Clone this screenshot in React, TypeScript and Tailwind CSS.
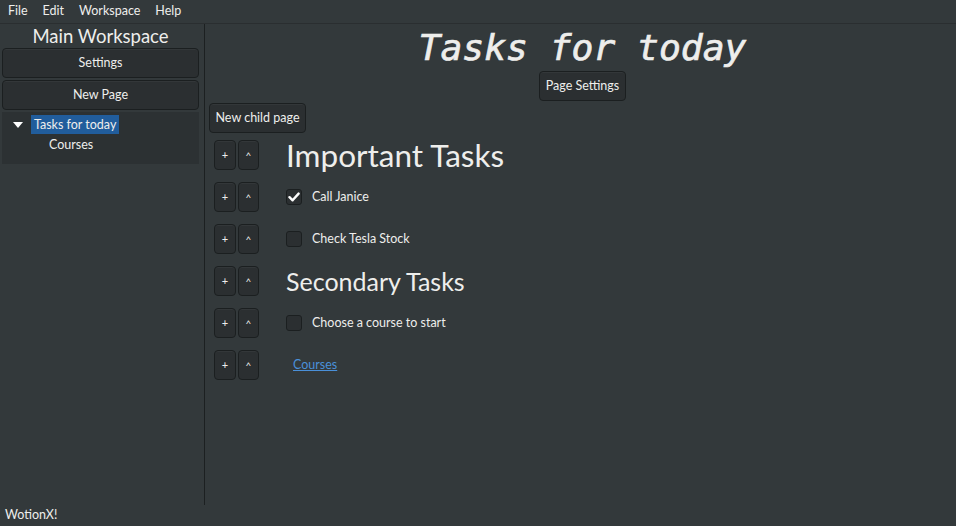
import React from "react";

const font = { fontFamily: "Lato, 'Open Sans', sans-serif" };

function Btn({ children, className = "" }: { children: React.ReactNode; className?: string }) {
  return (
    <div
      className={
        "flex items-center justify-center rounded-[4px] border border-[#1b1f20] bg-[#2b2f31] text-[#eeeeec] shadow-[inset_0_1px_0_rgba(255,255,255,0.04)] " +
        className
      }
    >
      {children}
    </div>
  );
}

function RowBtns() {
  return (
    <div className="flex gap-[2px]">
      <Btn className="h-[30px] w-[22px] text-[11px]">+</Btn>
      <Btn className="h-[30px] w-[21px] text-[10px]">^</Btn>
    </div>
  );
}

function Check({ checked }: { checked?: boolean }) {
  return (
    <div className="flex h-[16px] w-[16px] items-center justify-center rounded-[3px] border border-[#1b1f20] bg-[#2b2f31]">
      {checked && (
        <svg width="12" height="12" viewBox="0 0 12 12">
          <path d="M1.5 6.2 L4.6 9.3 L10.6 2.6" fill="none" stroke="#ffffff" strokeWidth="2.4" strokeLinecap="round" strokeLinejoin="round" />
        </svg>
      )}
    </div>
  );
}

function Row({ children }: { children: React.ReactNode }) {
  return (
    <div className="flex h-[30px] items-center">
      <RowBtns />
      <div className="ml-[27px] flex items-center">{children}</div>
    </div>
  );
}

export default function App() {
  return (
    <div className="flex h-[526px] w-[956px] flex-col bg-[#33393b] text-[#eeeeec]" style={font}>
      <div className="flex h-[24px] items-center gap-[15px] border-b border-[#2a2e30] pl-[8px] text-[12.5px]">
        <span>File</span>
        <span>Edit</span>
        <span>Workspace</span>
        <span>Help</span>
      </div>
      <div className="flex flex-1">
        <div className="flex w-[205px] flex-col border-r border-[#1c2021] pr-[5px] pl-[2px]">
          <div className="h-[24px] text-center text-[18.5px] leading-[24px]">Main Workspace</div>
          <Btn className="h-[30px] text-[12.5px]">Settings</Btn>
          <Btn className="mt-[2px] h-[30px] text-[12.5px]">New Page</Btn>
          <div className="mt-[2px] h-[52px] bg-[#2c3133] pt-[3px] text-[12.5px]">
            <div className="flex h-[19px] items-center">
              <svg width="10" height="6" viewBox="0 0 10 6" className="ml-[11px]">
                <path d="M0 0 L10 0 L5 6 Z" fill="#ffffff" />
              </svg>
              <span className="ml-[8px] bg-[#215d9c] px-[3px] leading-[19px]">Tasks for today</span>
            </div>
            <div className="ml-[47px] mt-[1px] leading-[19px]">Courses</div>
          </div>
        </div>
        <div className="flex flex-1 flex-col pl-[4px]">
          <div
            className="flex h-[47px] items-center justify-center pt-[2px] text-[36.3px] italic [-webkit-text-stroke:0.7px_#eeeeec]"
            style={{ fontFamily: "'DejaVu Sans Mono', monospace" }}
          >
            Tasks for today
          </div>
          <div className="flex justify-center">
            <Btn className="h-[30px] w-[87px] text-[12.5px]">Page Settings</Btn>
          </div>
          <div className="mt-[2px] flex">
            <Btn className="h-[30px] w-[97px] text-[12.5px]">New child page</Btn>
          </div>
          <div className="mt-[7px] flex flex-col gap-[12px] pl-[5px]">
            <Row>
              <span className="text-[31.5px] leading-[30px]">Important Tasks</span>
            </Row>
            <Row>
              <Check checked />
              <span className="ml-[10px] text-[12.5px]">Call Janice</span>
            </Row>
            <Row>
              <Check />
              <span className="ml-[10px] text-[12.5px]">Check Tesla Stock</span>
            </Row>
            <Row>
              <span className="text-[25px] leading-[30px]">Secondary Tasks</span>
            </Row>
            <Row>
              <Check />
              <span className="ml-[10px] text-[12.5px]">Choose a course to start</span>
            </Row>
            <Row>
              <span className="ml-[7px] text-[12.5px] text-[#4a90d9] underline">Courses</span>
            </Row>
          </div>
        </div>
      </div>
      <div className="flex h-[21px] items-center pl-[5px] text-[12.5px]">WotionX!</div>
    </div>
  );
}
